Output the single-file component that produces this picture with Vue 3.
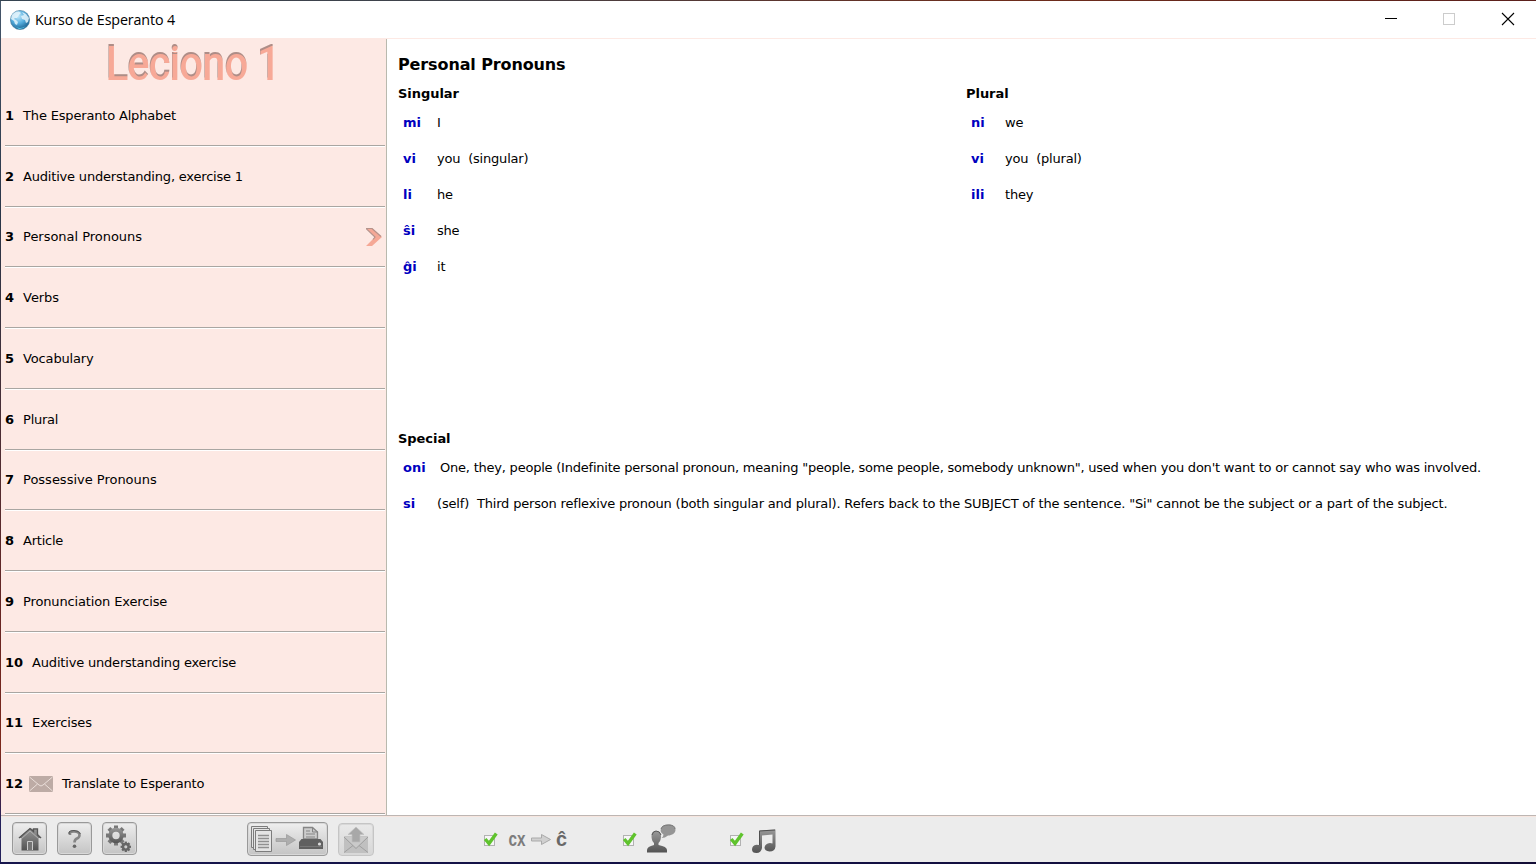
<script setup>
const lessons = [
  ['The Esperanto Alphabet', -0.17], ['Auditive understanding, exercise 1', -0.19], ['Personal Pronouns', -0.03], ['Verbs', -0.05],
  ['Vocabulary', -0.15], ['Plural', -0.25], ['Possessive Pronouns', -0.01], ['Article', -0.25], ['Pronunciation Exercise', -0.14],
  ['Auditive understanding exercise', -0.19], ['Exercises', -0.12], ['Translate to Esperanto', -0.18],
]
const singular = [['mi', 'I'], ['vi', 'you  (singular)'], ['li', 'he'], ['ŝi', 'she'], ['ĝi', 'it']]
const plural = [['ni', 'we'], ['vi', 'you  (plural)'], ['ili', 'they']]
const selfMeaning = '(self)  Third person reflexive pronoun (both singular and plural). Refers back to the SUBJECT of the sentence. "Si" cannot be the subject or a part of the subject.'
const teeth = [0, 45, 90, 135, 180, 225, 270, 315]
</script>

<template>
  <div class="desktop">
    <div class="window">
      <header class="titlebar">
        <svg class="globe" width="20" height="20" viewBox="0 0 20 20">
          <defs>
            <radialGradient id="sea" cx=".4" cy=".3" r=".75">
              <stop offset="0" stop-color="#c3e9fa" /><stop offset=".5" stop-color="#56aede" /><stop offset="1" stop-color="#155887" />
            </radialGradient>
          </defs>
          <circle cx="10" cy="10" r="9.6" fill="url(#sea)" stroke="#477b9b" stroke-width=".6" />
          <path d="M2 5Q5 1 9 1.500L11 3 9 5 7 8 5 8 4 9 6 10 8 12 7 15 5 14 4 11 1 9ZM12 2L16 4 19 8 18 12 16 13 15 10 12 9 11 6 14 5Z" fill="#e5f5fb" opacity=".85" />
          <path d="M4 16Q10 20 16 16Q13 19.500 9 19Z" fill="#64dcf8" opacity=".8" />
        </svg>
        <span class="app-name">Kurso de Esperanto 4</span>
        <svg class="controls" width="132" height="14" viewBox="0 0 132 14">
          <path d="M0 6.500H12" stroke="#000" />
          <rect x="58.500" y="1.500" width="11" height="11" fill="none" stroke="#ccc" />
          <path d="M117 1L129 13M129 1L117 13" stroke="#000" stroke-width="1.100" />
        </svg>
      </header>

      <div class="body">
        <nav class="sidebar">
          <svg class="lesson-title" width="380" height="47" viewBox="0 0 380 47">
            <defs>
              <mask id="letters" maskUnits="userSpaceOnUse" x="0" y="0" width="380" height="47">
                <text x="105" y="40" textLength="174" lengthAdjust="spacingAndGlyphs" fill="#fff" stroke="#fff" stroke-width="1.900">Leciono 1</text>
              </mask>
            </defs>
            <g mask="url(#letters)">
              <rect width="380" height="47" fill="#ae8d87" />
              <text x="105.500" y="41.700" textLength="174" lengthAdjust="spacingAndGlyphs" fill="#f7a997" stroke="#f7a997" stroke-width="1.900">Leciono 1</text>
              <rect y="38.500" width="380" height="9" fill="#f7a997" />
            </g>
          </svg>
          <ol class="lessons">
            <li v-for="([name, tracking], i) in lessons" :key="name">
              <b>{{ i + 1 }}</b>
              <svg v-if="i === 11" class="mail" width="24" height="16" viewBox="0 0 24 16">
                <rect width="24" height="16" rx="1" fill="#bdaba5" />
                <path d="M.5 1L10 9Q12 11 14 9L23.500 1M.5 15L8.500 8M23.500 15L15.500 8" fill="none" stroke="#eaded9" />
              </svg>
              <span :style="{ letterSpacing: tracking + 'px' }">{{ name }}</span>
              <svg v-if="i === 2" class="arrow" width="16" height="18" viewBox="0 0 16 18">
                <path d="M0 0H6L16 9 6 18H0L9 9Z" fill="#f5a896" />
                <path d="M0 .5H6L15 8.500M0 .5L9 9 7 11.500" fill="none" stroke="#b5938b" stroke-width="1.200" />
              </svg>
            </li>
          </ol>
        </nav>

        <main class="content">
          <h1>Personal Pronouns</h1>
          <div class="columns">
            <section>
              <h2>Singular</h2>
              <dl><div v-for="[word, meaning] in singular" :key="word"><dt>{{ word }}</dt><dd>{{ meaning }}</dd></div></dl>
            </section>
            <section>
              <h2>Plural</h2>
              <dl><div v-for="[word, meaning] in plural" :key="word"><dt>{{ word }}</dt><dd>{{ meaning }}</dd></div></dl>
            </section>
          </div>
          <section>
            <h2>Special</h2>
            <dl>
              <div><dt class="wide">oni</dt><dd class="long-a">One, they, people (Indefinite personal pronoun, meaning "people, some people, somebody unknown", used when you don't want to or cannot say who was involved.</dd></div>
              <div><dt>si</dt><dd class="long-b">{{ selfMeaning }}</dd></div>
            </dl>
          </section>
        </main>
      </div>

      <footer class="toolbar">
        <svg width="0" height="0" class="defs">
          <defs>
            <linearGradient id="steel" x2="0" y2="1"><stop stop-color="#999" /><stop offset="1" stop-color="#535353" /></linearGradient>
          </defs>
        </svg>
        <button class="home"><svg width="24" height="26" viewBox="0 0 24 26">
          <path d="M16 3.500H20V8L23.500 12H20.500V24.500H3.500V12H.5L12 2Z" fill="url(#steel)" />
          <path d="M1 12L12 2.500 15.500 5.500V3H19.500V9L23 12" fill="none" stroke="#555" stroke-width="1.300" />
          <path d="M3 13L12 5 21 13" fill="none" stroke="#b2b2b2" />
          <path d="M9.500 24V15.500H14.500V24" fill="#747474" stroke="#ccc" />
        </svg></button>
        <button class="help"><svg width="16" height="20" viewBox="0 0 16 20">
          <path d="M3 6V4Q3 2.500 7 2.500Q12.500 2.500 12.500 6Q12.500 8.500 10 9.500Q7.500 10.500 7.500 13.500" fill="none" stroke="#858585" stroke-width="2.600" />
          <path d="M2 5V3Q3 1.500 7 1.500Q12 1.500 13.500 5" fill="none" stroke="#555" />
          <circle cx="7.500" cy="17.200" r="1.800" fill="#666" />
        </svg></button>
        <button class="settings"><svg width="26" height="28" viewBox="0 0 26 28">
          <g transform="translate(10 10.500)" fill="url(#steel)">
            <rect v-for="a in teeth" :key="a" x="-2" y="-10" width="4" height="5" fill="#777" :transform="`rotate(${a})`" />
            <path fill-rule="evenodd" d="M0-7.700A7.700 7.700 0 1 1 0 7.700A7.700 7.700 0 1 1 0-7.700ZM0-3.700A3.700 3.700 0 1 0 0 3.700A3.700 3.700 0 1 0 0-3.700Z" />
          </g>
          <g transform="translate(19.800 21.800)" fill="#666">
            <rect v-for="a in teeth" :key="a" x="-1.100" y="-5.200" width="2.200" height="3" :transform="`rotate(${a})`" />
            <path fill-rule="evenodd" d="M0-4A4 4 0 1 1 0 4A4 4 0 1 1 0-4ZM0-1.600A1.600 1.600 0 1 0 0 1.600A1.600 1.600 0 1 0 0-1.600Z" />
          </g>
        </svg></button>
        <button class="print"><svg width="76" height="28" viewBox="0 0 76 28">
          <g fill="#e4e4e4" stroke="#7c7c7c">
            <path d="M1.500 1.500H17.500V22.500H1.500Z" /><path d="M3.500 3.500H19.500V24.500H3.500Z" /><path d="M5.500 5.500H21.500V26.500H5.500Z" />
            <path d="M8 10.500H19M8 13.500H19M8 16.500H19M8 19.500H19M8 22.500H19" stroke="#909090" stroke-width="1.300" />
          </g>
          <path d="M26 13.500H36.500V9.500L45.500 15 36.500 20.500V16.500H26Z" fill="#aeaeae" stroke="#999" stroke-width=".7" />
          <path d="M53.500 14V2.500H62.500L67.500 7V14Z" fill="#ccc" stroke="#858585" stroke-width="1.300" />
          <path d="M62.500 2V7H68M56 6H60M56 9H65M56 12H65" stroke="#858585" fill="none" />
          <path d="M51.500 14H70.500L73 17V24H49V17Z" fill="#606060" />
          <circle cx="69.500" cy="19" r="1.600" fill="#ddd" /><path d="M50 21.500H72" stroke="#777" />
        </svg></button>
        <button class="export" disabled><svg width="28" height="30" viewBox="0 0 28 30">
          <rect x="2" y="11" width="24" height="17" fill="#c0c0c0" rx="1" />
          <path d="M2 11.500H26L14 23Z" fill="#cacaca" />
          <path d="M2 12L14 23.500 26 12M2 27.500L11 20.500M26 27.500L17 20.500" fill="none" stroke="#9f9f9f" />
          <path d="M14 2L22 9.500H18V17H10V9.500H6Z" fill="#a8a8a8" stroke="#c0c0c0" stroke-width=".7" />
        </svg></button>

        <label class="option cx">
          <svg class="check" width="15" height="15" viewBox="0 0 15 15"><rect x="1.500" y="3.500" width="10" height="10" fill="#f6f6f6" stroke="#b2b2b2" /><path d="M2.200 7L6 11.500 13.300 1.500" fill="none" stroke="#5fc32d" stroke-width="3.400" /></svg>
          <svg width="60" height="24" viewBox="0 0 60 24">
            <text x="1.500" y="19" textLength="17" lengthAdjust="spacingAndGlyphs" class="glyphs">cx</text>
            <path d="M24.500 11H34.500V7.500L43.500 12.500 34.500 17.500V14H24.500Z" fill="#d0d0d0" stroke="#aaa" />
            <text x="49" y="19" textLength="11" lengthAdjust="spacingAndGlyphs" class="glyphs dark">ĉ</text>
          </svg>
        </label>
        <label class="option speech">
          <svg class="check" width="15" height="15" viewBox="0 0 15 15"><rect x="1.500" y="3.500" width="10" height="10" fill="#f6f6f6" stroke="#b2b2b2" /><path d="M2.200 7L6 11.500 13.300 1.500" fill="none" stroke="#5fc32d" stroke-width="3.400" /></svg>
          <svg width="30" height="30" viewBox="0 0 30 30">
            <path d="M5.500 12Q5.500 7 10 7Q15 7 15 12Q15 17 12.500 19V21Q21 22.500 21 26V28.500H1V26Q1 22.500 8 21V19Q5.500 17 5.500 12Z" fill="url(#steel)" />
            <path d="M6 11Q7 7 10 7Q14 7 15 11" fill="none" stroke="#565656" />
            <path d="M22.500 0.500C27 .5 29.500 3 29.500 6S26 11.500 22 11.500Q19 14 15.500 14Q17.500 12.500 17.500 10.500C15 9 14 7 15 4.500C16 2 18.500 .5 22.500 .5Z" fill="#959595" />
            <path d="M15 5Q16 1 22.500 1Q29 1 29 5" fill="none" stroke="#777" />
          </svg>
        </label>
        <label class="option music">
          <svg class="check" width="15" height="15" viewBox="0 0 15 15"><rect x="1.500" y="3.500" width="10" height="10" fill="#f6f6f6" stroke="#b2b2b2" /><path d="M2.200 7L6 11.500 13.300 1.500" fill="none" stroke="#5fc32d" stroke-width="3.400" /></svg>
          <svg width="24" height="26" viewBox="0 0 24 26">
            <path d="M7 2.500L23.500 1.500V18.500Q23 23.500 17.500 23.500Q12.500 23 12.500 19.500Q13 15.500 18 15L20.500 15.500V6.500L10 7.500V20Q9 25 4.500 25Q0 25 0 21.500Q0 17.500 4.500 16.800L7 17Z" fill="url(#steel)" />
            <path d="M7.500 17V3L23 2" fill="none" stroke="#505050" />
          </svg>
        </label>
      </footer>
    </div>
  </div>
</template>

<style>
html, body { margin: 0; overflow: hidden; }
</style>

<style scoped>
* { box-sizing: border-box; }
.desktop {
  width: 1536px; height: 864px; padding: 1px 0 2px 1px;
  background: linear-gradient(90deg, #354451 0, #40424a 30%, #6e2d1c 65%, #5b201c 100%) top / 100% 1px no-repeat,
    linear-gradient(90deg, #17164d, #121044 50%, #130d36) bottom / 100% 2px no-repeat,
    linear-gradient(#45566a, #293548 25%, #6c2420 75%, #7c281b 87%, #23205a 95%);
  font: 13px/16px "DejaVu Sans", Verdana, sans-serif; color: #000;
}
.window { height: 861px; display: flex; flex-direction: column; background: #fff; }
.titlebar { height: 37px; flex: none; display: flex; align-items: center; padding: 0 19px 0 9px; }
.app-name { margin-left: 5px; font: 14.3px/20px "Open Sans", "Noto Sans", sans-serif; letter-spacing: -.13px; white-space: nowrap; }
.controls { margin: -1px 0 0 auto; }
.body { flex: 1; display: flex; min-height: 0; border-top: 1px solid #fde9e4; }
.sidebar { width: 386px; flex: none; background: #fde9e4; border-right: 1px solid #b9b9ae; }
.lesson-title { display: block; margin-bottom: -.69px; overflow: visible; font: 48px Roboto, "Liberation Sans", sans-serif; }
.lessons { list-style: none; margin: 0; padding: 0 1px 0 4px; }
.lessons li { height: 60.727px; display: flex; align-items: center; padding: 1.75px 3px 0 0; border-bottom: 1px solid #a9a6a2; box-shadow: 0 1px #fff; white-space: pre; }
.lessons span { margin-left: 9px; }
.mail { margin-left: 6px; }
.arrow { margin: -1px 0 0 auto; }
.content { flex: 1; padding: 16px 11px; border-bottom: 1px solid #fff; }
h1 { margin: 0; font: bold 16px/20px "DejaVu Sans", sans-serif; letter-spacing: -.12px; }
h2 { margin: 0; font: bold 13px/16px "DejaVu Sans", sans-serif; letter-spacing: -.05px; }
.columns { display: grid; grid-template-columns: 568px 1fr; height: 345px; margin-top: 11px; }
dl { margin: 3px 0 0 5px; }
dl div { height: 36px; padding-top: 10px; display: flex; white-space: pre; }
dt { width: 34px; flex: none; font-weight: bold; color: #0000bf; }
dt.wide { width: 37px; }
dd { margin: 0; letter-spacing: -.2px; }
.long-a { letter-spacing: -.22px; }
.long-b { letter-spacing: -.18px; }
.toolbar { height: 47px; flex: none; display: flex; align-items: flex-start; background: #ececec; border-top: 1px solid #bdb6b3; box-shadow: inset 0 1px #f7e6df; padding: 6px 0 0 11px; }
.defs { position: absolute; }
button { height: 33px; width: 35px; padding: 0; display: flex; align-items: center; justify-content: center; border: 1px solid #999; border-radius: 4px; background: linear-gradient(#eee, #c4c4c4); box-shadow: inset 0 0 0 1px #d8d8d8; }
.help, .settings { margin-left: 10px; }
.settings svg { margin-left: -2px; }
.print { width: 81px; height: 34px; margin-left: 110px; }
.export { width: 36px; margin: 1px 0 0 10px; border-color: #c5c5c5; background: linear-gradient(#e9e9e9, #d7d7d7); }
.option { display: flex; align-items: center; height: 33px; }
.check { margin-top: 1px; }
.cx { margin-left: 109px; width: 139px; gap: 9px; }
.speech { width: 107px; gap: 9px; }
.music { gap: 8px; }
.music svg:last-child { margin-top: 5px; }
.glyphs { font: bold 20px "Liberation Sans", Arial, sans-serif; fill: #7c7c7c; }
.dark { fill: #686868; }
</style>
